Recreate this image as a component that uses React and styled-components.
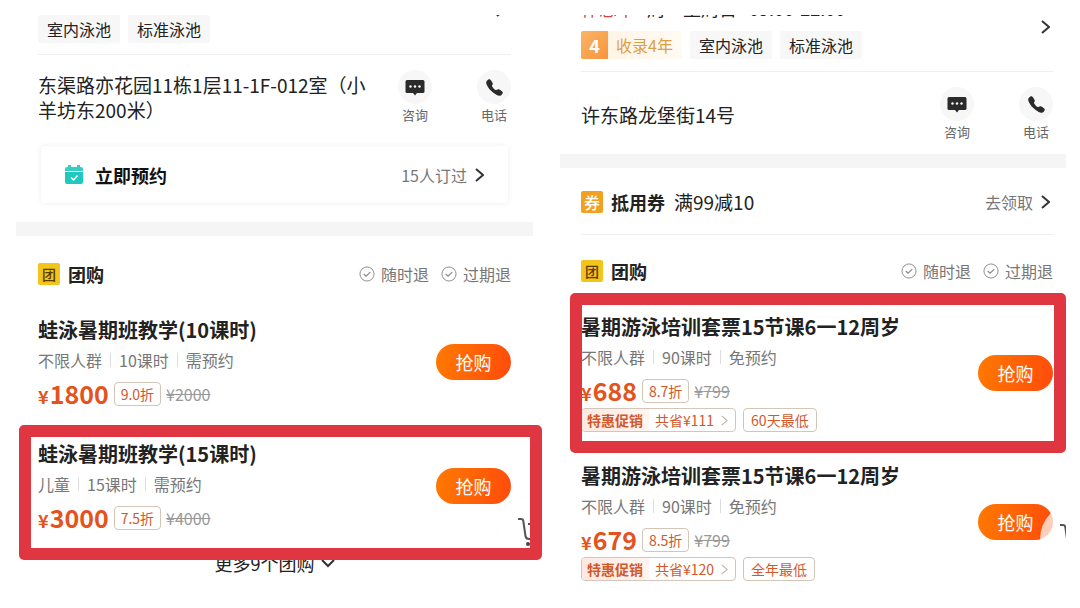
import React from 'react';
import styled, { createGlobalStyle } from 'styled-components';
import { IoCall } from 'react-icons/io5';

const GlobalStyle = createGlobalStyle`
    * {
        box-sizing: border-box;
    }

    body {
        margin: 0;
        background: #fff;
        color: #222;
        font-family: 'Noto Sans CJK SC', sans-serif;
    }

    h2, h3, p {
        margin: 0;
    }

    button {
        font-family: inherit;
        border: 0;
        padding: 0;
        background: none;
        cursor: pointer;
    }

    a {
        color: inherit;
        text-decoration: none;
    }
`;

/* Page and panels */
const Page = styled.main`
    display: grid;
    grid-template-columns: 517fr 506fr;
    gap: 27px;
    align-items: start;
    padding: 15px 14px 0 16px;
`;

const Panel = styled.section`
    position: relative;
    min-width: 0;
`;

const Block = styled.div`
    padding: 0 ${props => props.$right}px 0 ${props => props.$left}px;
`;

const Divider = styled.hr`
    height: 1px;
    margin: ${props => props.$top}px 0 0;
    border: 0;
    background: #eee;
`;

const Band = styled.div`
    height: 14px;
    margin-top: ${props => props.$top}px;
    background: #f5f5f5;
`;

/* Shop header */
const ShopHeader = styled.header`
    display: flex;
    justify-content: space-between;
    align-items: flex-start;
`;

// The header is scrolled out of view, only the lower edge of the row is left
const HoursRow = styled.div`
    display: flex;
    align-items: flex-end;
    gap: 12px;
    height: 4px;
    margin-bottom: 12px;
    overflow: hidden;
    font-size: 18px;
    line-height: 22px;
    white-space: nowrap;
`;

const ClosedText = styled.span`
    color: #d8413c;
`;

const ScrolledArrow = styled.div`
    display: flex;
    align-items: flex-end;
    height: 2px;
    margin-right: 6px;
    overflow: hidden;
`;

const HeaderArrow = styled.div`
    display: flex;
    margin-top: 5px;
    padding-right: 3px;
`;

const Tags = styled.div`
    display: flex;
    gap: 8px;
`;

const Tag = styled.span`
    padding: 0 9px;
    border-radius: 2px;
    background: #f7f7f7;
    font-size: 16px;
    line-height: 28px;
    white-space: nowrap;
`;

const YearTag = styled.span`
    display: flex;
    border-radius: 2px;
    overflow: hidden;
    background: linear-gradient(90deg, #fff3e2, #fffaf3);
    color: #dba046;
    font-size: 16px;
    line-height: 28px;
    white-space: nowrap;
`;

const YearNumber = styled.b`
    width: 27px;
    background: linear-gradient(135deg, #fbb566, #f7953c);
    color: #fff;
    font-size: 18px;
    text-align: center;
`;

const YearText = styled.span`
    padding: 0 9px 0 8px;
`;

/* Address and contact */
const ContactRow = styled.div`
    display: flex;
    align-items: center;
    justify-content: space-between;
    padding-top: 15px;
`;

const Address = styled.p`
    flex: 0 1 336px;
    font-size: 19px;
    line-height: 25px;
`;

const ContactActions = styled.div`
    display: flex;
    gap: 45px;
`;

const ContactButton = styled.button`
    display: flex;
    flex-direction: column;
    align-items: center;
    gap: 2px;
    width: 34px;
    color: #666;
    font-size: 13px;
    line-height: 18px;
`;

const ContactIcon = styled.span`
    display: flex;
    align-items: center;
    justify-content: center;
    width: 34px;
    height: 34px;
    border-radius: 50%;
    background: #f7f7f7;
    color: #2b2b2b;
`;

/* Booking card */
const BookingCard = styled.a`
    display: flex;
    align-items: center;
    height: 57px;
    margin: 22px 3px 0;
    padding: 0 24px;
    border-radius: 3px;
    box-shadow: 0 0 5px rgba(0, 0, 0, 0.08);
`;

const BookingTitle = styled.b`
    margin-left: 12px;
    color: #111;
    font-size: 18px;
`;

const MoreText = styled.span`
    display: flex;
    align-items: center;
    gap: 8px;
    margin-left: auto;
    padding-right: ${props => props.$right || 0}px;
    color: #777;
    font-size: 16px;
    line-height: 22px;
`;

/* Section headings */
const SectionHeader = styled.div`
    display: flex;
    align-items: center;
    height: 22px;
    margin-top: ${props => props.$top}px;
`;

const SectionIcon = styled.span`
    width: 22px;
    height: 22px;
    border-radius: 2px;
    background: ${props => props.$voucher ? '#f2a01f' : '#f3c41b'};
    color: ${props => props.$voucher ? '#fff' : '#5b3a08'};
    font-size: ${props => props.$voucher ? 16 : 14}px;
    font-weight: 500;
    line-height: 22px;
    text-align: center;
`;

const SectionTitle = styled.h2`
    margin-left: 8px;
    font-size: 18px;
    font-weight: 700;
    line-height: 22px;
`;

const VoucherText = styled.span`
    margin-left: 9px;
    font-size: 19px;
    line-height: 22px;
`;

const Refunds = styled.div`
    display: flex;
    gap: 12px;
    margin-left: auto;
    color: #777;
    font-size: 16px;
    line-height: 22px;
`;

const Refund = styled.span`
    display: flex;
    align-items: center;
    gap: 6px;
`;

/* Deals */
const DealList = styled.div`
    display: flex;
    flex-direction: column;
    gap: ${props => props.$gap}px;
    margin-top: 32px;
`;

const DealItem = styled.article`
    position: relative;
    display: flex;
    align-items: center;
    justify-content: space-between;
`;

const DealTitle = styled.h3`
    font-size: 20px;
    font-weight: 700;
    line-height: 26px;
    white-space: nowrap;
`;

const DealMeta = styled.div`
    display: flex;
    align-items: center;
    margin-top: 6px;
    color: #777;
    font-size: 16px;
    line-height: 22px;

    span + span {
        margin-left: 8px;
        padding-left: 9px;
        background: linear-gradient(#ddd, #ddd) left center / 1px 14px no-repeat;
    }
`;

const PriceRow = styled.div`
    display: flex;
    align-items: center;
    gap: 5px;
    height: 26px;
    margin-top: 10px;
`;

const Price = styled.strong`
    color: #e5531d;
    font-size: 25px;
    line-height: 26px;

    small {
        margin-right: 1px;
        font-size: 18px;
    }
`;

const Badge = styled.span`
    display: inline-flex;
    align-items: center;
    height: 24px;
    padding: 0 ${props => props.$pad || 6}px;
    border: 1px solid #d3c5b8;
    border-radius: 4px;
    color: #d2582b;
    font-size: 14px;
    white-space: nowrap;
`;

const OldPrice = styled.del`
    color: #999;
    font-size: 16px;
    line-height: 26px;
`;

const PromoRow = styled.div`
    display: flex;
    gap: 7px;
    margin-top: 4px;
`;

const PromoBadge = styled(Badge)`
    padding: 0 7px 0 0;
    overflow: hidden;
`;

const PromoName = styled.b`
    padding: 0 6px 0 5px;
    background: linear-gradient(90deg, #fde9e1, #fef4f0);
    line-height: 24px;
`;

const PromoSaving = styled.span`
    padding: 0 7px 0 6px;
`;

const BuyButton = styled.button`
    width: 75px;
    height: 36px;
    border-radius: 18px;
    background: linear-gradient(100deg, #ff7a00, #ff4b0c);
    color: #fff;
    font-size: 18px;
    line-height: 36px;
`;

const MoreDeals = styled.button`
    display: flex;
    align-items: center;
    justify-content: center;
    gap: 6px;
    width: 100%;
    margin-top: 20px;
    color: #222;
    font-size: 18px;
    line-height: 24px;
`;

const Highlight = styled.div`
    position: absolute;
    z-index: 2;
    inset: ${props => props.$inset};
    border: 12px solid #e03642;
    border-radius: 5px;
    pointer-events: none;
`;

/* Floating cart, cut off by the edge of the panel */
const CartLayer = styled.div`
    position: absolute;
    z-index: 1;
    inset: 0;
    overflow: hidden;
    pointer-events: none;
`;

const CartCircle = styled.div`
    position: absolute;
    top: ${props => props.$top}px;
    right: ${props => props.$right}px;
    width: 72px;
    height: 72px;
    padding: 20px;
    border-radius: 50%;
    background: rgba(255, 255, 255, 0.72);
    box-shadow: 0 0 4px rgba(0, 0, 0, 0.02);
`;

const Chevron = ({ width = 9, height = 14, color = '#333', stroke = 2 }) => (
    <svg width={width} height={height} viewBox="0 0 9 14" fill="none">
        <path d="M1 1l7 6-7 6" stroke={color} strokeWidth={stroke} />
    </svg>
);

const ChevronDown = () => (
    <svg width="14" height="9" viewBox="0 0 14 9" fill="none">
        <path d="M1 1l6 6 6-6" stroke="#333" strokeWidth="2" />
    </svg>
);

const ChatIcon = () => (
    <svg width="20" height="18" viewBox="0 0 20 18">
        <path d="M2 2h16a1.5 1.5 0 0 1 1.5 1.5v10a1.5 1.5 0 0 1-1.5 1.5h-6l-2 2.5-2-2.5H2a1.5 1.5 0 0 1-1.5-1.5v-10A1.5 1.5 0 0 1 2 2z" fill="#2b2b2b" />
        <circle cx="5.5" cy="8.5" r="1.2" fill="#fff" />
        <circle cx="10" cy="8.5" r="1.2" fill="#fff" />
        <circle cx="14.5" cy="8.5" r="1.2" fill="#fff" />
    </svg>
);

const CalendarIcon = () => (
    <svg width="18" height="20" viewBox="0 0 18 20" fill="none">
        <path d="M0 6V4a2 2 0 0 1 2-2h1V0h3v2h6V0h3v2h1a2 2 0 0 1 2 2v2z" fill="#35cdc4" />
        <path d="M0 7h18v10a2 2 0 0 1-2 2H2a2 2 0 0 1-2-2z" fill="#20c9c0" />
        <path d="M6 12.5l2.5 2.5 4-4.5" stroke="#fff" strokeWidth="1.5" />
    </svg>
);

const CheckIcon = () => (
    <svg width="16" height="16" viewBox="0 0 17 17" fill="none" stroke="#8a8a8a">
        <circle cx="8.5" cy="8.5" r="7.5" />
        <path d="M5 8.5l2.5 2.3L12 6.5" strokeWidth="1.3" />
    </svg>
);

const CartIcon = () => (
    <svg width="32" height="32" viewBox="0 0 32 32" fill="none">
        <path d="M0 2h3q2 0 2.3 2l2.2 15q.5 3 3.5 3h16M10 7h19l-3 11H12" stroke="#555" strokeWidth="2" />
        <circle cx="10" cy="27" r="2" fill="#444" />
        <circle cx="24" cy="27" r="2" fill="#444" />
    </svg>
);

const Contact = ({ address }) => (
    <ContactRow>
        <Address>{address}</Address>
        <ContactActions>
            <ContactButton>
                <ContactIcon><ChatIcon /></ContactIcon>
                咨询
            </ContactButton>
            <ContactButton>
                <ContactIcon><IoCall size={19} /></ContactIcon>
                电话
            </ContactButton>
        </ContactActions>
    </ContactRow>
);

const GroupHeader = ({ top }) => (
    <SectionHeader $top={top}>
        <SectionIcon>团</SectionIcon>
        <SectionTitle>团购</SectionTitle>
        <Refunds>
            <Refund><CheckIcon />随时退</Refund>
            <Refund><CheckIcon />过期退</Refund>
        </Refunds>
    </SectionHeader>
);

const Deal = ({ deal, highlight }) => (
    <DealItem>
        <div>
            <DealTitle>{deal.title}</DealTitle>
            <DealMeta>
                {deal.meta.map(text => <span key={text}>{text}</span>)}
            </DealMeta>
            <PriceRow>
                <Price><small>¥</small>{deal.price}</Price>
                <Badge>{deal.discount}</Badge>
                <OldPrice>¥{deal.oldPrice}</OldPrice>
            </PriceRow>
            {deal.saving && (
                <PromoRow>
                    <PromoBadge>
                        <PromoName>特惠促销</PromoName>
                        <PromoSaving>共省¥{deal.saving}</PromoSaving>
                        <Chevron width={7} height={11} color="#c9b4a6" stroke={1.5} />
                    </PromoBadge>
                    <Badge $pad={7}>{deal.lowest}</Badge>
                </PromoRow>
            )}
        </div>
        <BuyButton>抢购</BuyButton>
        {highlight && <Highlight $inset={highlight} />}
    </DealItem>
);

const frogDeals = [
    { title: '蛙泳暑期班教学(10课时)', meta: ['不限人群', '10课时', '需预约'], price: 1800, discount: '9.0折', oldPrice: 2000 },
    { title: '蛙泳暑期班教学(15课时)', meta: ['儿童', '15课时', '需预约'], price: 3000, discount: '7.5折', oldPrice: 4000 },
];

const summerDeals = [
    { title: '暑期游泳培训套票15节课6一12周岁', meta: ['不限人群', '90课时', '免预约'], price: 688, discount: '8.7折', oldPrice: 799, saving: 111, lowest: '60天最低' },
    { title: '暑期游泳培训套票15节课6一12周岁', meta: ['不限人群', '90课时', '免预约'], price: 679, discount: '8.5折', oldPrice: 799, saving: 120, lowest: '全年最低' },
];

const App = () => (
    <>
        <GlobalStyle />
        <Page>
            <Panel>
                <Block $left={22} $right={22}>
                    <ShopHeader>
                        <Tags>
                            <Tag>室内泳池</Tag>
                            <Tag>标准泳池</Tag>
                        </Tags>
                        <ScrolledArrow><Chevron /></ScrolledArrow>
                    </ShopHeader>
                    <Divider $top={11} />
                    <Contact address="东渠路亦花园11栋1层11-1F-012室（小羊坊东200米）" />
                    <BookingCard href="#book">
                        <CalendarIcon />
                        <BookingTitle>立即预约</BookingTitle>
                        <MoreText>15人订过<Chevron /></MoreText>
                    </BookingCard>
                </Block>
                <Band $top={19} />
                <Block $left={22} $right={22}>
                    <GroupHeader top={27} />
                    <DealList $gap={34}>
                        <Deal deal={frogDeals[0]} />
                        <Deal deal={frogDeals[1]} highlight="-16px -31px -29px -19px" />
                    </DealList>
                    <MoreDeals>更多9个团购<ChevronDown /></MoreDeals>
                </Block>
                <CartLayer>
                    <CartCircle $top={482} $right={-37}><CartIcon /></CartCircle>
                </CartLayer>
            </Panel>

            <Panel>
                <Block $left={21} $right={13}>
                    <ShopHeader>
                        <div>
                            <HoursRow>
                                <ClosedText>休息中</ClosedText>
                                <span>周一至周日</span>
                                <span>09:00-22:00</span>
                            </HoursRow>
                            <Tags>
                                <YearTag>
                                    <YearNumber>4</YearNumber>
                                    <YearText>收录4年</YearText>
                                </YearTag>
                                <Tag>室内泳池</Tag>
                                <Tag>标准泳池</Tag>
                            </Tags>
                        </div>
                        <HeaderArrow><Chevron /></HeaderArrow>
                    </ShopHeader>
                    <Divider $top={12} />
                    <Contact address="许东路龙堡街14号" />
                </Block>
                <Band $top={13} />
                <Block $left={21} $right={13}>
                    <SectionHeader $top={23}>
                        <SectionIcon $voucher>券</SectionIcon>
                        <SectionTitle>抵用券</SectionTitle>
                        <VoucherText>满99减10</VoucherText>
                        <MoreText $right={3}>去领取<Chevron /></MoreText>
                    </SectionHeader>
                    <Divider $top={21} />
                    <GroupHeader top={25} />
                    <DealList $gap={31}>
                        <Deal deal={summerDeals[0]} highlight="-21px -13px -21px -11px" />
                        <Deal deal={summerDeals[1]} />
                    </DealList>
                </Block>
                <CartLayer>
                    <CartCircle $top={488} $right={-46}><CartIcon /></CartCircle>
                </CartLayer>
            </Panel>
        </Page>
    </>
);

export default App;
